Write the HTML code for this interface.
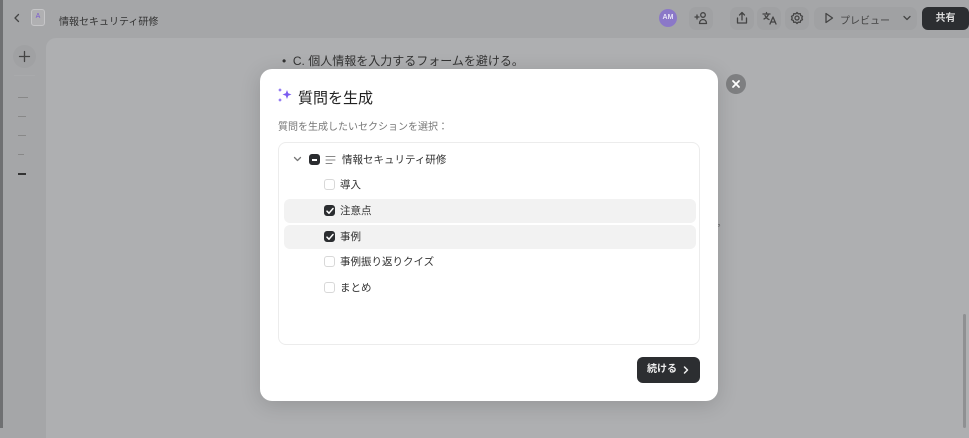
<!DOCTYPE html><html><head><meta charset="utf-8"><style>
*{box-sizing:border-box;margin:0;padding:0}
body{width:969px;height:428px;overflow:hidden;background:#a5a6a8;font-family:"Liberation Sans","Noto Sans CJK JP",sans-serif;position:relative}
.abs{position:absolute}
.lb{left:0;top:0;width:3px;height:428px;background:#6f7072}
.canvas{left:46px;top:38px;width:923px;height:400px;background:#aeafb1;border-top-left-radius:10px}
.ib{background:#a0a1a3;border-radius:7px;width:24px;height:23px;top:7px}
.modal{left:260px;top:69px;width:458px;height:332px;background:#fff;border-radius:12px;box-shadow:0 4px 20px rgba(0,0,0,.15)}
.box{left:18px;top:73px;width:422px;height:203px;border:1px solid #ececec;border-radius:8px}
.row{position:absolute;left:5px;width:412px;height:24px;border-radius:6px;font-size:10.5px;color:#333}
.cb{position:absolute;left:40px;top:6px;width:11px;height:11px;border:1px solid #d8d8d8;border-radius:3px;background:#fff}
.cb.on{background:#2b2d30;border-color:#2b2d30}
.lbl{position:absolute;left:56px;top:4px}
svg{position:absolute;fill:none;stroke:#444;stroke-width:1.3;stroke-linecap:round;stroke-linejoin:round}
</style></head><body>
<div class="abs lb"></div>
<svg style="left:13px;top:13px" width="8" height="10" viewBox="0 0 8 10"><path d="M5.5 1.5L2 5l3.5 3.5"/></svg>
<div class="abs" style="left:31px;top:9px;width:14px;height:17px;border:1px solid #c6c6c8;border-radius:3px;background:#b0b0b2;font-size:7px;color:#7a5ad0;text-align:center;line-height:13px">A</div>
<div class="abs" style="left:59px;top:13px;font-size:10px;color:#333">情報セキュリティ研修</div>
<div class="abs" style="left:659px;top:9px;width:18px;height:18px;border-radius:50%;background:#8b78c8;color:#e8e4f6;font-size:7px;font-weight:bold;text-align:center;line-height:18px">AM</div>
<div class="abs ib" style="left:689px"></div>
<svg style="left:693px;top:11px" width="16" height="14" viewBox="0 0 16 14"><path d="M2 6h4M4 4v4"/><circle cx="10" cy="4" r="2.3"/><path d="M6.5 12.5h7c0-2.5-1.5-4-3.5-4s-3.5 1.5-3.5 4z"/></svg>
<div class="abs ib" style="left:730px"></div>
<svg style="left:735px;top:11px" width="14" height="14" viewBox="0 0 14 14"><path d="M7 9V1.5M4.5 4L7 1.5 9.5 4M2.5 7v5h9V7"/></svg>
<div class="abs ib" style="left:757px"></div>
<svg style="left:762px;top:11px" width="15" height="14" viewBox="0 0 15 14"><path d="M1 3h7M4.5 1.5V3M2 8c2-1 4-3 4.5-5M3 4.5c1 2 2.5 3.5 4 4M8 13l3-7 3 7M9 11h4"/></svg>
<div class="abs ib" style="left:785px"></div>
<svg style="left:790px;top:11px" width="14" height="14" viewBox="0 0 14 14"><circle cx="7" cy="7" r="2"/><path d="M7 1.5l1.3 1.4 1.9-.3.5 1.9 1.8.8-.7 1.7.7 1.7-1.8.8-.5 1.9-1.9-.3L7 12.5l-1.3-1.4-1.9.3-.5-1.9-1.8-.8.7-1.7-.7-1.7 1.8-.8.5-1.9 1.9.3z"/></svg>
<div class="abs" style="left:814px;top:7px;width:103px;height:23px;background:#a0a1a3;border-radius:7px"></div>
<svg style="left:824px;top:12px" width="10" height="12" viewBox="0 0 10 12"><path d="M2 1.5l6.5 4.5L2 10.5z"/></svg>
<div class="abs" style="left:840px;top:12px;font-size:10px;color:#444">プレビュー</div>
<svg style="left:902px;top:14px" width="10" height="8" viewBox="0 0 10 8"><path d="M2 2.5l3 3 3-3"/></svg>
<div class="abs" style="left:922px;top:7px;width:47px;height:23px;background:#2c2e31;border-radius:6px;color:#ddd;font-size:10px;font-weight:bold;text-align:center;line-height:23px">共有</div>
<div class="abs canvas"></div>
<div class="abs" style="left:13px;top:45px;width:23px;height:23px;border-radius:50%;background:#a0a1a3"></div>
<svg style="left:18px;top:50px" width="13" height="13" viewBox="0 0 13 13"><path d="M6.5 1.5v10M1.5 6.5h10"/></svg>
<div class="abs" style="left:14px;top:75px;width:21px;height:1px;background:#a9aaac"></div>
<div class="abs" style="left:18px;top:97px;width:10px;height:1px;background:#888"></div>
<div class="abs" style="left:18px;top:116px;width:8px;height:1px;background:#888"></div>
<div class="abs" style="left:18px;top:135px;width:8px;height:1px;background:#888"></div>
<div class="abs" style="left:18px;top:154px;width:6px;height:1px;background:#888"></div>
<div class="abs" style="left:18px;top:173px;width:8px;height:2px;background:#333"></div>
<div class="abs" style="left:282px;top:52px;font-size:12px;color:#333">•&nbsp; C. 個人情報を入力するフォームを避ける。</div>
<div class="abs" style="left:717px;top:216px;font-size:9px;color:#555">。</div>
<div class="abs" style="left:963px;top:314px;width:3px;height:114px;background:#8f9092;border-radius:2px"></div>
<div class="abs" style="left:726px;top:74px;width:20px;height:20px;border-radius:50%;background:#7e7f81"></div>
<svg style="left:731px;top:79px;stroke:#fff;stroke-width:1.8" width="10" height="10" viewBox="0 0 10 10"><path d="M2 2l6 6M8 2L2 8"/></svg>
<div class="abs modal">
 <svg style="left:16px;top:18px;stroke:none;fill:#7a5cf0" width="18" height="17" viewBox="0 0 18 17"><path d="M11 3l1.2 3.3L15.5 7.5l-3.3 1.2L11 12 9.8 8.7 6.5 7.5l3.3-1.2z"/><path d="M4 1l.6 1.4L6 3l-1.4.6L4 5l-.6-1.4L2 3l1.4-.6z"/><path d="M4 11l.6 1.4L6 13l-1.4.6L4 15l-.6-1.4L2 13l1.4-.6z"/></svg>
 <div class="abs" style="left:38px;top:18px;font-size:15px;color:#222">質問を生成</div>
 <div class="abs" style="left:18px;top:49px;font-size:10px;color:#777">質問を生成したいセクションを選択：</div>
 <div class="abs box">
  <div class="row" style="top:5px"><svg style="left:9px;top:8px;stroke:#777" width="9" height="7" viewBox="0 0 9 7"><path d="M1.5 1.5l3 3 3-3"/></svg><span class="cb on" style="left:25px"><span class="abs" style="left:2px;top:4px;width:5px;height:1.5px;background:#fff"></span></span><svg style="left:41px;top:7px;stroke:#888;stroke-width:1" width="11" height="10" viewBox="0 0 11 10"><path d="M1 1.5h9M1 5h9M1 8.5h6"/></svg><span class="lbl" style="left:58px">情報セキュリティ研修</span></div>
  <div class="row" style="top:30px"><span class="cb"></span><span class="lbl">導入</span></div>
  <div class="row" style="top:56px;background:#f2f2f2"><span class="cb on"><svg style="left:1px;top:1px;stroke:#fff;stroke-width:1.5" width="8" height="8" viewBox="0 0 8 8"><path d="M1 4.2l2 2L7 1.5"/></svg></span><span class="lbl">注意点</span></div>
  <div class="row" style="top:82px;background:#f2f2f2"><span class="cb on"><svg style="left:1px;top:1px;stroke:#fff;stroke-width:1.5" width="8" height="8" viewBox="0 0 8 8"><path d="M1 4.2l2 2L7 1.5"/></svg></span><span class="lbl">事例</span></div>
  <div class="row" style="top:107px"><span class="cb"></span><span class="lbl">事例振り返りクイズ</span></div>
  <div class="row" style="top:133px"><span class="cb"></span><span class="lbl">まとめ</span></div>
 </div>
 <div class="abs" style="left:377px;top:288px;width:63px;height:26px;background:#2c2e31;border-radius:6px;color:#eee;font-size:10px;font-weight:bold;line-height:26px;padding-left:10px">続ける</div>
 <svg style="left:422px;top:296px;stroke:#eee;stroke-width:1.5" width="8" height="10" viewBox="0 0 8 10"><path d="M2.5 2l3 3-3 3"/></svg>
</div>
</body></html>
